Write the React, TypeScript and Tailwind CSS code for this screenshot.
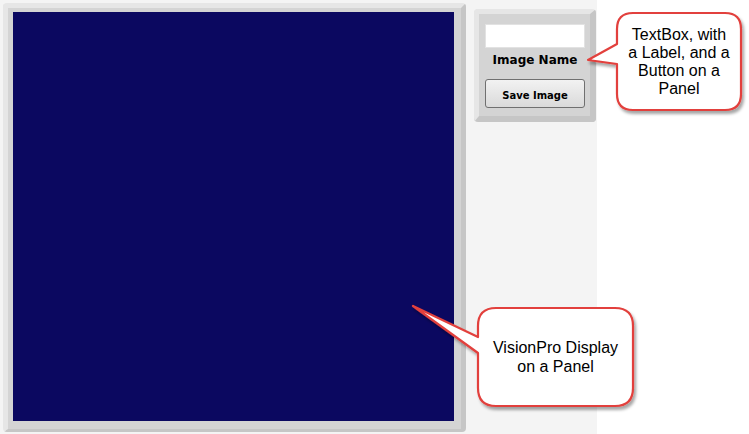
import React from "react";

function Callouts() {
  const r1 = { x: 617, y: 13, w: 124, h: 97, r: 16 };
  const r2 = { x: 478, y: 308, w: 155, h: 98, r: 18 };
  const p1 = `M ${r1.x + r1.r} ${r1.y} H ${r1.x + r1.w - r1.r} Q ${r1.x + r1.w} ${r1.y} ${r1.x + r1.w} ${r1.y + r1.r} V ${r1.y + r1.h - r1.r} Q ${r1.x + r1.w} ${r1.y + r1.h} ${r1.x + r1.w - r1.r} ${r1.y + r1.h} H ${r1.x + r1.r} Q ${r1.x} ${r1.y + r1.h} ${r1.x} ${r1.y + r1.h - r1.r} V 64 L 588 60 L ${r1.x} 44 V ${r1.y + r1.r} Q ${r1.x} ${r1.y} ${r1.x + r1.r} ${r1.y} Z`;
  const p2 = `M ${r2.x + r2.r} ${r2.y} H ${r2.x + r2.w - r2.r} Q ${r2.x + r2.w} ${r2.y} ${r2.x + r2.w} ${r2.y + r2.r} V ${r2.y + r2.h - r2.r} Q ${r2.x + r2.w} ${r2.y + r2.h} ${r2.x + r2.w - r2.r} ${r2.y + r2.h} H ${r2.x + r2.r} Q ${r2.x} ${r2.y + r2.h} ${r2.x} ${r2.y + r2.h - r2.r} V 353 L 413 306 L ${r2.x} 337 V ${r2.y + r2.r} Q ${r2.x} ${r2.y} ${r2.x + r2.r} ${r2.y} Z`;
  return (
    <>
      <svg className="absolute left-0 top-0" width="749" height="434" viewBox="0 0 749 434">
        <defs>
          <filter id="sh" x="-20%" y="-20%" width="140%" height="140%">
            <feDropShadow dx="2" dy="3" stdDeviation="1.5" floodColor="#000" floodOpacity="0.35" />
          </filter>
        </defs>
        <path d={p1} fill="#ffffff" stroke="#e2403c" strokeWidth="2.2" strokeLinejoin="round" filter="url(#sh)" />
        <path d={p2} fill="#ffffff" stroke="#e2403c" strokeWidth="2.2" strokeLinejoin="round" filter="url(#sh)" />
      </svg>
      <div
        className="absolute left-[617px] top-[13px] w-[124px] h-[97px] flex items-center justify-center text-center text-[16px] leading-[18px] text-black"
        style={{ fontFamily: '"Liberation Sans", Arial, sans-serif' }}
      >
        <div>
          TextBox, with
          <br />a Label, and a
          <br />
          Button on a
          <br />
          Panel
        </div>
      </div>
      <div
        className="absolute left-[478px] top-[308px] w-[155px] h-[98px] flex items-center justify-center text-center text-[16px] leading-[19px] text-black"
        style={{ fontFamily: '"Liberation Sans", Arial, sans-serif' }}
      >
        <div>
          VisionPro Display
          <br />
          on a Panel
        </div>
      </div>
    </>
  );
}

export default function App() {
  return (
    <div className="relative w-[749px] h-[434px] bg-white flex overflow-hidden">
      <div className="w-[597px] h-[434px] bg-[#f4f4f4] flex items-start">
        {/* Left display panel */}
        <div className="ml-[3px] mt-[3px] w-[463px] h-[429px] rounded-[4px] border-t-[5px] border-l-[5px] border-r-[5px] border-b-[3px] border-t-[#e6e6e6] border-l-[#e6e6e6] border-r-[#c6c6c6] border-b-[#c6c6c6] bg-[#d4d4d4] pt-[4px] pl-[5px] pr-[7px] pb-[8px]">
          <div className="w-full h-full bg-[#0b0860]" />
        </div>
        {/* Right control panel */}
        <div className="ml-[8px] mt-[9px] w-[122px] h-[113px] rounded-[4px] border-t-[5px] border-l-[5px] border-r-[6px] border-b-[6px] border-t-[#e6e6e6] border-l-[#e6e6e6] border-r-[#c6c6c6] border-b-[#c6c6c6] bg-[#d4d4d4] pl-[6px] pr-[5px] pt-[10px] flex flex-col">
          <div className="w-[100px] h-[24px] bg-white border border-[#e2e2e2]" />
          <div
            className="mt-[4px] text-center text-[12px] font-bold leading-[16px] text-black w-[100px]"
            style={{ fontFamily: '"DejaVu Sans", Tahoma, sans-serif' }}
          >
            Image Name
          </div>
          <button
            className="mt-[11px] w-[100px] h-[29px] rounded-[3px] border border-[#707070] bg-gradient-to-b from-[#f2f2f2] to-[#dadada] text-[10px] font-bold text-black flex items-center justify-center pt-[3px]"
            style={{ fontFamily: '"DejaVu Sans", Tahoma, sans-serif' }}
          >
            Save Image
          </button>
        </div>
      </div>
      <Callouts />
    </div>
  );
}
